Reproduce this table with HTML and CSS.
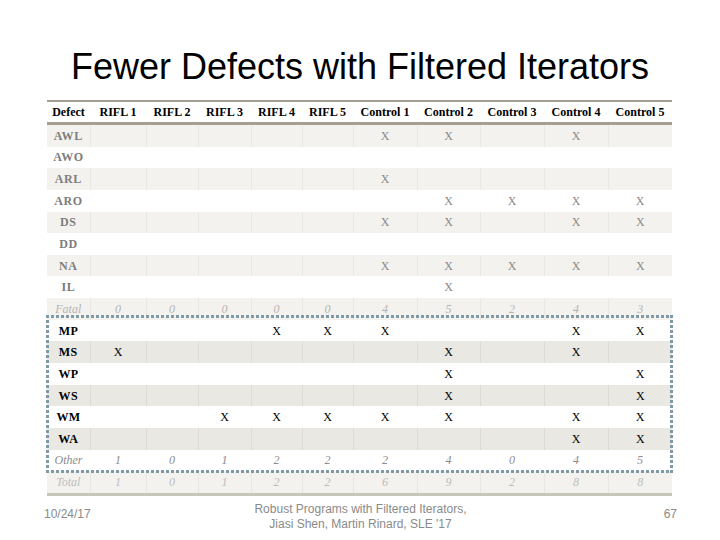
FILE: index.html
```html
<!DOCTYPE html>
<html>
<head>
<meta charset="utf-8">
<link rel="stylesheet" href="styles.css">
</head>
<body>
<div class="slide">
  <h1 class="title">Fewer Defects with Filtered Iterators</h1>
  <div class="tablewrap">
    <table class="defects">
      <colgroup>
        <col style="width:43px"><col style="width:56px"><col style="width:52px"><col style="width:53px"><col style="width:51px"><col style="width:51px">
        <col style="width:64px"><col style="width:63px"><col style="width:64px"><col style="width:64px"><col style="width:64px">
      </colgroup>
      <thead>
        <tr><th>Defect</th><th>RIFL 1</th><th>RIFL 2</th><th>RIFL 3</th><th>RIFL 4</th><th>RIFL 5</th><th>Control 1</th><th>Control 2</th><th>Control 3</th><th>Control 4</th><th>Control 5</th></tr>
      </thead>
      <tbody class="upper">
        <tr class="band"><td class="name">AWL</td><td></td><td></td><td></td><td></td><td></td><td>X</td><td>X</td><td></td><td>X</td><td></td></tr>
        <tr><td class="name">AWO</td><td></td><td></td><td></td><td></td><td></td><td></td><td></td><td></td><td></td><td></td></tr>
        <tr class="band"><td class="name">ARL</td><td></td><td></td><td></td><td></td><td></td><td>X</td><td></td><td></td><td></td><td></td></tr>
        <tr><td class="name">ARO</td><td></td><td></td><td></td><td></td><td></td><td></td><td>X</td><td>X</td><td>X</td><td>X</td></tr>
        <tr class="band"><td class="name">DS</td><td></td><td></td><td></td><td></td><td></td><td>X</td><td>X</td><td></td><td>X</td><td>X</td></tr>
        <tr><td class="name">DD</td><td></td><td></td><td></td><td></td><td></td><td></td><td></td><td></td><td></td><td></td></tr>
        <tr class="band"><td class="name">NA</td><td></td><td></td><td></td><td></td><td></td><td>X</td><td>X</td><td>X</td><td>X</td><td>X</td></tr>
        <tr><td class="name">IL</td><td></td><td></td><td></td><td></td><td></td><td></td><td>X</td><td></td><td></td><td></td></tr>
        <tr class="band sum fatal"><td>Fatal</td><td>0</td><td>0</td><td>0</td><td>0</td><td>0</td><td>4</td><td>5</td><td>2</td><td>4</td><td>3</td></tr>
      </tbody>
      <tbody class="lower">
        <tr><td class="name">MP</td><td></td><td></td><td></td><td>X</td><td>X</td><td>X</td><td></td><td></td><td>X</td><td>X</td></tr>
        <tr class="band"><td class="name">MS</td><td>X</td><td></td><td></td><td></td><td></td><td></td><td>X</td><td></td><td>X</td><td></td></tr>
        <tr><td class="name">WP</td><td></td><td></td><td></td><td></td><td></td><td></td><td>X</td><td></td><td></td><td>X</td></tr>
        <tr class="band"><td class="name">WS</td><td></td><td></td><td></td><td></td><td></td><td></td><td>X</td><td></td><td></td><td>X</td></tr>
        <tr><td class="name">WM</td><td></td><td></td><td>X</td><td>X</td><td>X</td><td>X</td><td>X</td><td></td><td>X</td><td>X</td></tr>
        <tr class="band"><td class="name">WA</td><td></td><td></td><td></td><td></td><td></td><td></td><td></td><td></td><td>X</td><td>X</td></tr>
        <tr class="sum other"><td>Other</td><td>1</td><td>0</td><td>1</td><td>2</td><td>2</td><td>2</td><td>4</td><td>0</td><td>4</td><td>5</td></tr>
        <tr class="sum total"><td>Total</td><td>1</td><td>0</td><td>1</td><td>2</td><td>2</td><td>6</td><td>9</td><td>2</td><td>8</td><td>8</td></tr>
      </tbody>
    </table>
    <div class="highlight"></div>
  </div>
  <div class="footer">
    <div class="date">10/24/17</div>
    <div class="credit">Robust Programs with Filtered Iterators,<br>Jiasi Shen, Martin Rinard, SLE '17</div>
    <div class="page">67</div>
  </div>
</div>
</body>
</html>
```

FILE: styles.css
```css
html, body {
  margin: 0;
  padding: 0;
  background: #ffffff;
}

.slide {
  width: 720px;
  height: 540px;
  position: relative;
  overflow: hidden;
  font-family: "Liberation Sans", Arial, sans-serif;
}

.title {
  margin: 0;
  padding-top: 47px;
  font-family: "Liberation Sans", Arial, sans-serif;
  font-weight: normal;
  font-size: 36px;
  line-height: 40px;
  color: #000000;
  text-align: center;
  height: 53px;
  box-sizing: content-box;
}

.tablewrap {
  position: relative;
  width: 625px;
  margin-left: 47px;
}

.defects {
  table-layout: fixed;
  width: 625px;
  border-collapse: collapse;
  font-family: "Liberation Serif", "Times New Roman", serif;
  font-size: 12px;
  border-top: 2px solid #a39f91;
  border-bottom: 3px solid #c9c6bc;
}

.defects thead th {
  height: 20px;
  padding: 0;
  font-weight: bold;
  color: #000000;
  text-align: center;
  white-space: nowrap;
  border-bottom: 3px solid #a39f91;
}

.defects td {
  height: 21.65px;
  padding: 0;
  text-align: center;
  white-space: nowrap;
  line-height: 14px;
}

.defects tbody tr {
  height: 21.65px;
}

.upper td {
  color: #8a8a8a;
}

.upper .band td {
  background: #f3f2ee;
  border-left: 1px solid #e9e7e2;
}

.lower .band td {
  background: #eae8e2;
  border-left: 1px solid #dedbd3;
}

.defects tr td:first-child {
  border-left: none;
}

.upper td.name {
  color: #7d7d7d;
  font-weight: bold;
  letter-spacing: 0.6px;
}

.lower td {
  color: #000000;
}

.lower td.name {
  color: #000000;
  font-weight: bold;
  letter-spacing: 0.4px;
}

.sum td {
  font-style: italic;
}

.fatal td {
  color: #b4b4b4;
}

.other td {
  color: #8c8c8c;
}

.lower .total td {
  color: #bdbdbd;
  background: #f3f2ee;
  border-left: 1px solid #e9e7e2;
}

.lower .total td:first-child {
  border-left: none;
}

.highlight {
  position: absolute;
  left: -1px;
  top: 215px;
  width: 627px;
  height: 158px;
  pointer-events: none;
  background:
    repeating-linear-gradient(90deg, #7f9aa6 0 3px, transparent 3px 5px) left top / 100% 3px no-repeat,
    repeating-linear-gradient(90deg, #7f9aa6 0 3px, transparent 3px 5px) left bottom / 100% 3px no-repeat,
    repeating-linear-gradient(180deg, #7f9aa6 0 3px, transparent 3px 5px) left top / 3px 100% no-repeat,
    repeating-linear-gradient(180deg, #7f9aa6 0 3px, transparent 3px 5px) right top / 3px 100% no-repeat;
}

.footer {
  display: flex;
  align-items: flex-start;
  justify-content: space-between;
  margin-top: 6px;
  padding-left: 44px;
  padding-right: 43px;
  font-family: "Liberation Sans", Arial, sans-serif;
  font-size: 12px;
  color: #8a8a8a;
}

.date, .page {
  width: 80px;
  padding-top: 5px;
  line-height: 15px;
}

.page {
  text-align: right;
}

.credit {
  text-align: center;
  line-height: 15px;
}
```
